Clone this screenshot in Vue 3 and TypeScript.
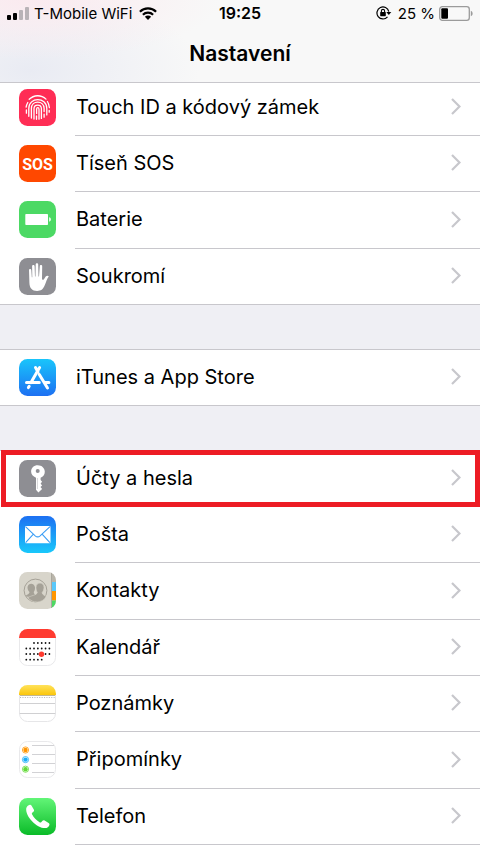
<script setup lang="ts">
type IconName =
  | 'touch' | 'sos' | 'battery' | 'hand' | 'store' | 'key' | 'mail'
  | 'contacts' | 'calendar' | 'notes' | 'reminders' | 'phone'

interface Item {
  icon: IconName
  label: string
  marked?: boolean
}

const groups: Item[][] = [
  [
    { icon: 'touch', label: 'Touch ID a kódový zámek' },
    { icon: 'sos', label: 'Tíseň SOS' },
    { icon: 'battery', label: 'Baterie' },
    { icon: 'hand', label: 'Soukromí' },
  ],
  [{ icon: 'store', label: 'iTunes a App Store' }],
  [
    { icon: 'key', label: 'Účty a hesla', marked: true },
    { icon: 'mail', label: 'Pošta' },
    { icon: 'contacts', label: 'Kontakty' },
    { icon: 'calendar', label: 'Kalendář' },
    { icon: 'notes', label: 'Poznámky' },
    { icon: 'reminders', label: 'Připomínky' },
    { icon: 'phone', label: 'Telefon' },
  ],
]

const calendarDots: [number, number][] = []
const calendarRows: [number, number, number][] = [[14, 2, 6], [19.5, 0, 6], [25, 0, 6], [30.7, 0, 4]]
for (const [y, from, to] of calendarRows) {
  for (let i = from; i <= to; i++) calendarDots.push([7.3 + i * 3.85, y])
}

const reminderRows = [
  { y: 9, color: '#ff9500' },
  { y: 18.6, color: '#1badf8' },
  { y: 28.2, color: '#63da38' },
]
</script>

<template>
  <div class="screen">
    <header class="top">
      <div class="status">
        <div class="carrier">
          <svg class="signal" viewBox="0 0 22 13" aria-hidden="true">
            <rect x="0" y="8" width="4" height="5" rx="1" />
            <rect x="6" y="6" width="4" height="7" rx="1" />
            <rect x="12" y="3" width="4" height="10" rx="1" fill="#b9b3b7" />
            <rect x="18" y="0" width="4" height="13" rx="1" fill="#b9b3b7" />
          </svg>
          <span>T-Mobile WiFi</span>
          <svg class="wifi" viewBox="0 0 18 13" aria-hidden="true">
            <g fill="none" stroke="#000" stroke-width="2.2">
              <path d="M.9 4.7a11.6 11.6 0 0 1 16.2 0" />
              <path d="M3.9 7.8a7.3 7.3 0 0 1 10.2 0" />
            </g>
            <path d="M9 12.9 5.9 9.8a4.4 4.4 0 0 1 6.2 0z" />
          </svg>
        </div>
        <time class="clock">19:25</time>
        <div class="power">
          <svg class="lock" viewBox="0 0 16 14" aria-hidden="true">
            <path d="M11.5 10.9A6 6 0 1 1 12.8 5.6" fill="none" stroke="#000" stroke-width="1.2" />
            <path d="M10.3 5.9h5L12.8 9z" />
            <rect x="4.2" y="6" width="5.6" height="4.2" rx=".6" />
            <path d="M5.4 6.2V5a1.600 1.600 0 0 1 3.200 0v1.200" fill="none" stroke="#000" stroke-width="1.100" />
          </svg>
          <span>25 %</span>
          <svg class="cell" viewBox="0 0 34 15" aria-hidden="true">
            <rect x=".7" y=".7" width="29.600" height="13.600" rx="2.600" fill="none" stroke="#9b9b9b" stroke-width="1.300" />
            <rect x="2.300" y="2.300" width="6.700" height="10.400" rx="1" />
            <path d="M31.800 4.700c2.400.8 2.400 4.800 0 5.600z" fill="#9b9b9b" />
          </svg>
        </div>
      </div>
      <h1>Nastavení</h1>
    </header>

    <main>
      <ul v-for="(group, g) in groups" :key="g" class="group">
        <li v-for="item in group" :key="item.icon" :class="{ marked: item.marked }">
          <a href="#" class="row">
            <svg class="icon" viewBox="0 0 37 37" aria-hidden="true">
              <template v-if="item.icon === 'touch'">
                <rect width="37" height="37" rx="8.5" fill="#ff2d55" />
                <g fill="none" stroke="#fff" stroke-width="1.3" stroke-linecap="round">
                  <path d="M10.2 10.3c4.6-4.6 12-4.8 16.800-.2" />
                  <path d="M7.100 18.200c.3-2 .9-3.300 1.700-4.700M28.400 12.500c1.200 1.800 1.800 3.700 2 6.200" />
                  <path d="M7.400 21v3.200M9.800 27.300v-7.800c0-11.800 17.800-11.800 18 0v6.400" />
                  <path d="M12.400 29v-9.400c0-8.600 12.500-8.600 12.700 0v3M25.100 25.200v3" />
                  <path d="M15 30v-10.200c0-5 7.400-5 7.400 0v9.600" />
                  <path d="M17.500 30.300v-3.400M17.600 24.500v-4.300c0-2 2.400-2 2.400 0v10M30.200 21.400v1.800" />
                </g>
              </template>
              <template v-else-if="item.icon === 'sos'">
                <rect width="37" height="37" rx="8.5" fill="#ff4800" />
                <text x="18.5" y="24.500" class="sos">SOS</text>
              </template>
              <template v-else-if="item.icon === 'battery'">
                <rect width="37" height="37" rx="8.5" fill="#4cd964" />
                <rect x="6.3" y="13" width="22.7" height="11" rx=".8" fill="#fff" />
                <path d="M30.2 16.3c2.200.5 2.200 3.900 0 4.400z" fill="#fff" />
              </template>
              <template v-else-if="item.icon === 'hand'">
                <rect width="37" height="37" rx="8.5" fill="#8e8e93" />
                <path
                  fill="#fff"
                  d="M10 12c0-1.5 2.2-1.5 2.3 0l.5 7.2h.5l-.2-11c0-1.6 2.5-1.6 2.5 0l.4 10.2h.5l.2-12c0-1.7 2.5-1.7 2.5 0l.3 12h.5l.8-10.2c.1-1.6 2.5-1.4 2.4.2l-.2 12.2c0 1.5 1.2 1.7 2.1.3l1.6-2.3c.8-1.2 2.4-1.2 3.1-.4-1.8 2.1-2.7 6.2-4.3 9.6-1.6 3.4-3.4 5.2-7.4 5.2-5 0-7.6-3-7.7-8.2z"
                />
              </template>
              <template v-else-if="item.icon === 'store'">
                <linearGradient id="store-bg" x2="0" y2="1">
                  <stop stop-color="#19c5fb" /><stop offset="1" stop-color="#1d70f2" />
                </linearGradient>
                <rect width="37" height="37" rx="8.5" fill="url(#store-bg)" />
                <g fill="none" stroke="#fff" stroke-width="3" stroke-linecap="round">
                  <path d="M20.6 8.500 12 23.600M16.500 8.500 19 13M20.300 15.500 28.500 29M10.200 27.200 9.400 28.600" />
                  <path d="M7.500 23.600h12.800M26.200 23.600h3.700" />
                </g>
              </template>
              <template v-else-if="item.icon === 'key'">
                <rect width="37" height="37" rx="8.5" fill="#8e8e93" />
                <path
                  fill="#fff"
                  fill-rule="evenodd"
                  d="M18.7 5.2c4.2 0 7.1 2.900 7.1 6.600 0 2.800-1.600 5-4.200 6v2.300l1.500 1.700-1.500 1.800 1.500 1.800-1.600 1.700 1.600 1.800-3.700 3.500-2.400-2.600V17.700c-3-1.100-4.900-3.300-4.900-6.100 0-3.700 2.800-6.400 6.600-6.400zm0 3.700a2 2 0 1 0 0 4 2 2 0 0 0 0-4z"
                />
                <path d="M18.400 18v11" stroke="#b9b9bc" stroke-width=".6" />
              </template>
              <template v-else-if="item.icon === 'mail'">
                <linearGradient id="mail-bg" x2="0" y2="1">
                  <stop stop-color="#1d70f2" /><stop offset="1" stop-color="#19c8fb" />
                </linearGradient>
                <rect width="37" height="37" rx="8.5" fill="url(#mail-bg)" />
                <rect x="6" y="10" width="25.5" height="17.2" rx="1" fill="#fff" />
                <path
                  d="m6.5 10.600 9.700 9.200c1.700 1.500 3.200 1.500 4.900 0l9.900-9.200M6.600 26.700l7.800-8.500M30.900 26.700l-7.800-8.500"
                  fill="none" stroke="#3a9df5" stroke-width="1.1"
                />
              </template>
              <template v-else-if="item.icon === 'contacts'">
                <clipPath id="contacts-clip"><rect width="37" height="37" rx="8.5" /></clipPath>
                <g clip-path="url(#contacts-clip)">
                  <rect width="37" height="37" fill="#d8d5cb" />
                  <rect x="32" width="5" height="10" fill="#b9b5aa" />
                  <rect x="32" y="10" width="5" height="9" fill="#5ac8fa" />
                  <rect x="32" y="19" width="5" height="9.5" fill="#ff9500" />
                  <rect x="32" y="28.5" width="5" height="9" fill="#4cd964" />
                  <path d="M32.5 0v37" stroke="#aaa79d" />
                  <circle cx="16.500" cy="18.500" r="11.400" fill="none" stroke="#a5a197" />
                  <g fill="#a5a197">
                    <path d="M8.500 15.500c0-5 7.300-5.100 7.500 0 .1 2-.5 3.500-1.300 4.500.2 2.300 1.600 2.500 2.100 3.400l-3 2.400-7.200-1.500c.5-1.700 3.800-1.700 3.900-4.200-1-1-2-2.500-2-4.600z" />
                    <path d="M17 15.300c0-5.600 8-5.600 8 0 0 2.500-.9 4-1.900 5.100.1 2.700 2.700 2.700 4.100 4.100-3.600 7-14 7.200-18.200 1.200 2.300-2.200 8.900-2.200 9.400-5.300-.9-1.200-1.400-2.700-1.400-5.100z" stroke="#d8d5cb" stroke-width=".6" />
                  </g>
                </g>
              </template>
              <template v-else-if="item.icon === 'calendar'">
                <clipPath id="calendar-clip"><rect width="37" height="37" rx="8.5" /></clipPath>
                <g clip-path="url(#calendar-clip)">
                  <rect width="37" height="37" fill="#fff" />
                  <rect width="37" height="9" fill="#ff3b30" />
                </g>
                <path d="M.5 9v19.500a8 8 0 0 0 8 8h20a8 8 0 0 0 8-8V9" fill="none" stroke="#e9e9eb" />
                <circle v-for="([x, y], i) in calendarDots" :key="i" :cx="x" :cy="y" r=".9" fill="#111" />
                <circle cx="22.500" cy="25.200" r="2.700" fill="#ff3b30" />
              </template>
              <template v-else-if="item.icon === 'notes'">
                <linearGradient id="notes-bg" x2="0" y2="1">
                  <stop stop-color="#ffe25a" /><stop offset="1" stop-color="#fbc60b" />
                </linearGradient>
                <clipPath id="notes-clip"><rect width="37" height="37" rx="8.5" /></clipPath>
                <g clip-path="url(#notes-clip)">
                  <rect width="37" height="37" fill="#fff" />
                  <rect width="37" height="10" fill="url(#notes-bg)" />
                  <path d="M0 10.500h37" stroke="#c2b78f" />
                  <path d="M1 12.500h36" stroke="#bbb" stroke-width="1.100" stroke-dasharray="1.100 1.300" />
                  <path d="M0 18.500h37M0 28.500h37" stroke="#d0d0d2" />
                </g>
                <path d="M.5 10v18.500a8 8 0 0 0 8 8h20a8 8 0 0 0 8-8V10" fill="none" stroke="#e6e6e8" />
              </template>
              <template v-else-if="item.icon === 'reminders'">
                <rect x=".5" y=".5" width="36" height="36" rx="8" fill="#fff" stroke="#e9e9eb" />
                <g v-for="r in reminderRows" :key="r.y">
                  <circle cx="6.500" :cy="r.y" r="3.100" fill="none" :stroke="r.color" stroke-width=".8" />
                  <circle cx="6.500" :cy="r.y" r="2.200" :fill="r.color" />
                </g>
                <path d="M13 4.500h22M13 13.500h23M13 22.500h23M13 31.500h22" stroke="#d2d2d5" />
              </template>
              <template v-else>
                <linearGradient id="phone-bg" x2="0" y2="1">
                  <stop stop-color="#62f577" /><stop offset="1" stop-color="#0abb28" />
                </linearGradient>
                <rect width="37" height="37" rx="8.5" fill="url(#phone-bg)" />
                <path
                  fill="#fff"
                  d="M7.200 10.400c.3-1.700 2-3.500 3.700-3.700.8-.1 1.300.3 1.700 1l2.200 3.800c.5.900.3 1.600-.4 2.200l-1.200 1c-.5.500-.5 1-.2 1.600 1.900 3.400 4.200 5.900 7.500 8 .6.400 1.200.4 1.700-.1l1.300-1.400c.6-.7 1.300-.8 2.100-.3l4 2.500c.8.500 1 1.100.8 1.900-.5 1.900-2.200 3.200-4.300 3.200-8.600-.2-19.700-11.500-18.900-19.700z"
                />
              </template>
            </svg>
            <span class="text">
              <span>{{ item.label }}</span>
              <svg class="chevron" viewBox="0 0 10 17" aria-hidden="true">
                <path d="m1 1 7.500 7.500L1 16" fill="none" stroke="#c7c7cc" stroke-width="2.200" />
              </svg>
            </span>
          </a>
        </li>
      </ul>
    </main>
  </div>
</template>

<style>
body {
  margin: 0;
}
</style>

<style scoped>
.screen {
  display: flex;
  flex-direction: column;
  min-height: 100vh;
  background: #efeff4;
  color: #000;
  font-family: Inter, Roboto, "Liberation Sans", sans-serif;
}

.top {
  position: sticky;
  top: 0;
  z-index: 1;
  box-sizing: border-box;
  height: 83px;
  border-bottom: 1px solid #c8c7cc;
  background:
    radial-gradient(ellipse 190px 60px at 30px 0, #faeaef, transparent),
    radial-gradient(ellipse 170px 80px at 30px 70px, #e9ebf3, transparent),
    #f8f8f8;
}

.status {
  display: grid;
  grid-template-columns: 1fr auto 1fr;
  align-items: center;
  height: 26px;
  padding: 0 7px;
  font-size: 15px;
}

.carrier,
.power {
  display: flex;
  align-items: center;
  gap: 5px;
}

.power {
  justify-content: flex-end;
  gap: 4px;
}

.clock {
  font-size: 16px;
  font-weight: 600;
}

.signal {
  width: 22px;
  height: 13px;
}

.wifi {
  width: 18px;
  height: 13px;
  margin-left: 2px;
}

.lock {
  width: 16px;
  height: 14px;
  margin-right: 2px;
}

.cell {
  width: 34px;
  height: 15px;
}

h1 {
  margin: 0;
  font-size: 21px;
  font-weight: 600;
  line-height: 56px;
  text-align: center;
}

main {
  display: flex;
  flex: 1;
  flex-direction: column;
  gap: 44px;
  margin-top: -4px;
}

.group {
  margin: 0;
  padding: 0;
  border-top: 1px solid #c8c7cc;
  background: #fff;
  list-style: none;
}

.group:last-child {
  flex: 1;
}

.row {
  display: flex;
  min-height: 56px;
  padding-left: 19px;
  color: inherit;
  text-decoration: none;
}

li:nth-child(3n) .row {
  min-height: 57px;
}

.icon {
  flex: none;
  width: 37px;
  height: 37px;
  margin: 9px 19px 0 0;
}

.sos {
  fill: #fff;
  font-family: "Liberation Sans Narrow", Roboto, sans-serif;
  font-size: 16px;
  font-weight: 700;
  text-anchor: middle;
}

.text {
  display: flex;
  flex: 1;
  align-items: center;
  justify-content: space-between;
  padding: 0 19px 2px 1px;
  border-bottom: 1px solid #c8c7cc;
  font-size: 20px;
}

.group:not(:last-child) li:last-child .row {
  min-height: 55px;
  border-bottom: 1px solid #c8c7cc;
}

.group:not(:last-child) li:last-child .text {
  border-bottom: 0;
}

.chevron {
  width: 10px;
  height: 17px;
}

.marked {
  position: relative;
}

.marked::after {
  position: absolute;
  inset: -1px 0 0 1px;
  border: 5px solid #ed1c24;
  content: "";
  pointer-events: none;
}
</style>
